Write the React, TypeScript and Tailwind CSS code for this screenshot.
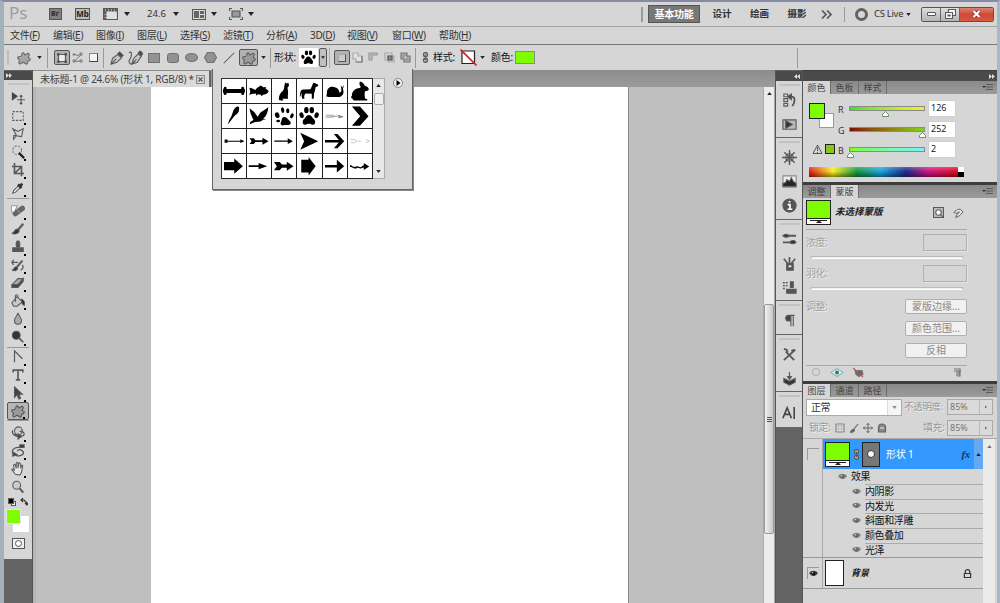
import type { ReactNode } from 'react'
import clsx from 'clsx'

interface IconProps {
  children: ReactNode
  className?: string
  box?: string
}

/** Stroke based icon, 16x16 grid unless another box is passed */
function Icon({ children, className = 'size-4', box = '0 0 16 16' }: IconProps) {
  return (
    <svg viewBox={box} className={clsx('shrink-0', className)} fill="none" stroke="#595959" strokeWidth="1.2">
      {children}
    </svg>
  )
}

function Caret({ className = 'h-[4px] w-[6px]' }: { className?: string }) {
  return (
    <svg viewBox="0 0 6 4" className={clsx('shrink-0', className)}>
      <path d="M0 0h6L3 4z" fill="#222" />
    </svg>
  )
}

// rounded five-lobed blob of the custom shape tool
const BLOB =
  'M5.500 4C5.800 1.500 8 1.500 8.500 4c.6.9 1.500.3 2.700-.7C13 2 14.800 3.200 13.800 5L12.800 7c0 1 2.400.8 2.400 2.500S12.800 11.200 12 12c-.6 1 .6 3-1.300 3S8.500 13 7 13s-2.500 2.300-4.300 1.600S3 11.500 2.700 10.500.7 9.500.7 7.800 3 6.300 4 6.300 5.200 5.500 5.500 4z'

const PAW = (
  <g fill="#000" stroke="none">
    <ellipse cx="14" cy="35" rx="6.500" ry="9" transform="rotate(-20 14 35)" />
    <ellipse cx="29" cy="19" rx="7" ry="10" />
    <ellipse cx="46" cy="19" rx="7" ry="10" />
    <ellipse cx="61" cy="35" rx="6.500" ry="9" transform="rotate(20 61 35)" />
    <path d="M37 34c9 0 10 9 16 14 6 6 4 19-5 17-5-1-6-3-11-3s-6 2-11 3c-9 2-11-11-5-17 6-5 7-14 16-14z" />
  </g>
)

/* ---------- title bar ---------- */

function TitleBar() {
  return (
    <header className="flex h-[25px] shrink-0 items-center border-b border-[#a3a3a3] bg-[#d6d6d6] text-[11px] text-[#333]">
      <div className="w-[40px] pb-[3px] pl-[5px] text-[17px] leading-none text-[#9c9c9c]">Ps</div>
      <div className="flex w-[22px] justify-center">
        <span className="flex h-[12px] w-[13px] items-center justify-center border border-[#555] bg-[#808080] text-[7px] font-bold text-[#2a2a2a]">Br</span>
      </div>
      <div className="flex w-[33px] justify-center">
        <span className="flex h-[12px] w-[15px] items-center justify-center border border-[#555] bg-[#bcbcbc] text-[8px] font-bold text-[#222]">Mb</span>
      </div>
      <div className="flex w-[23px] justify-center">
        <Icon className="h-[12px] w-[15px]" box="0 0 15 12">
          <path d="M.5.500h14v11H.5z" fill="#e0e0e0" />
          <path d="M0 2h15M2 3.500V12" strokeWidth="3" strokeDasharray="2.500 .5" />
        </Icon>
      </div>
      <div className="flex w-[9px] justify-center"><Caret /></div>
      <div className="ml-[11px] w-[29px] text-center text-[9.500px]">24.6</div>
      <div className="flex w-[9px] justify-center"><Caret /></div>
      <div className="ml-[9px] flex w-[20px] justify-center">
        <Icon className="h-[11px] w-[14px]" box="0 0 14 11">
          <path d="M.5.500h13v10H.5z" fill="#ddd" />
          <path d="M2 2h5v7H2zM8 2h4v3H8zM8 6h4v3H8z" fill="#666" stroke="none" />
        </Icon>
      </div>
      <div className="flex w-[10px] justify-center"><Caret /></div>
      <div className="ml-[7px] flex w-[20px] justify-center">
        <Icon className="h-[12px] w-[14px]" box="0 0 14 12">
          <path d="M3 3h8v6H3z" fill="#999" />
          <path d="M0 .5h3M.5 0v3M11 .5h3M13.500 0v3M0 11.500h3M.5 12V9M11 11.500h3M13.500 12V9" />
        </Icon>
      </div>
      <div className="flex w-[10px] justify-center"><Caret /></div>
      <div className="ml-[385px] h-[15px] w-[2px] border-x border-[#999]" />
      <div className="ml-[5px] flex h-[18px] w-[52px] items-center justify-center border border-[#555] bg-[#777] text-[10px] font-bold tracking-[-0.3px] text-white">
        基本功能
      </div>
      <div className="w-[44px] text-center text-[9.500px] font-bold">设计</div>
      <div className="w-[31px] text-center text-[9.500px] font-bold">绘画</div>
      <div className="w-[44px] text-center text-[9.500px] font-bold">摄影</div>
      <Icon className="h-[9px] w-[15px]" box="0 0 15 9">
        <path d="m3 .5 4 4-4 4M8 .5l4 4-4 4" strokeWidth="1.700" />
      </Icon>
      <div className="ml-[10px] h-[15px] w-px bg-[#999]" />
      <div className="ml-[10px] size-[13px] rounded-full border-[3px] border-[#626262]" />
      <div className="ml-[6px] w-[30px] text-[9.500px] tracking-[-0.3px] whitespace-nowrap">CS Live</div>
      <div className="flex w-[9px] justify-center"><Caret className="h-[3px] w-[5px]" /></div>
      <div className="ml-[8px] flex h-[15px] w-[73px] overflow-hidden rounded-[2px] border border-[#555]">
        <div className="flex w-[19px] items-center justify-center border-r border-[#666] bg-linear-to-b from-[#dedede] to-[#b4b4b4]">
          <span className="h-[4px] w-[9px] rounded-[1px] border border-[#555] bg-white" />
        </div>
        <div className="flex w-[19px] items-center justify-center border-r border-[#666] bg-linear-to-b from-[#dedede] to-[#b4b4b4]">
          <Icon className="h-[10px] w-[11px]" box="0 0 11 10">
            <path d="M3.500.500h7v6h-7z" fill="#fff" />
            <path d="M.5 3.500h7v6h-7zM3 6h2v1H3z" fill="#fff" />
          </Icon>
        </div>
        <div className="flex flex-1 items-center justify-center bg-linear-to-b from-[#dc8071] via-[#cf4a35] to-[#d4593f]">
          <Icon className="h-[8px] w-[9px]" box="0 0 9 8">
            <path d="m1.500 1 6 6M7.500 1l-6 6" stroke="#6d2a22" strokeWidth="3.400" />
            <path d="m1.500 1 6 6M7.500 1l-6 6" stroke="#fff" strokeWidth="2.200" />
          </Icon>
        </div>
      </div>
    </header>
  )
}

/* ---------- menu ---------- */

const MENUS = [
  { label: '文件', key: 'F', width: 'w-[43px]' },
  { label: '编辑', key: 'E', width: 'w-[43px]' },
  { label: '图像', key: 'I', width: 'w-[41px]' },
  { label: '图层', key: 'L', width: 'w-[43px]' },
  { label: '选择', key: 'S', width: 'w-[43px]' },
  { label: '滤镜', key: 'T', width: 'w-[43px]' },
  { label: '分析', key: 'A', width: 'w-[44px]' },
  { label: '3D', key: 'D', width: 'w-[37px]' },
  { label: '视图', key: 'V', width: 'w-[45px]' },
  { label: '窗口', key: 'W', width: 'w-[47px]' },
  { label: '帮助', key: 'H', width: 'w-[43px]' },
]

function MenuBar() {
  return (
    <nav className="flex h-[18px] shrink-0 items-center border-b border-[#777] bg-[#d6d6d6] pl-[6px] text-[10px] tracking-[-0.3px] text-[#333]">
      {MENUS.map(menu => (
        <div key={menu.key} className={clsx('shrink-0 whitespace-nowrap', menu.width)}>
          {menu.label}(<u>{menu.key}</u>)
        </div>
      ))}
    </nav>
  )
}

/* ---------- options bar ---------- */

function Cell({ className, children }: { className: string; children?: ReactNode }) {
  return <div className={clsx('flex shrink-0 items-center justify-center', className)}>{children}</div>
}

function OptionsBar() {
  return (
    <div className="flex h-[25px] shrink-0 items-center bg-[#d6d6d6] text-[10px] text-[#111]">
      <Cell className="w-[8px]"><div className="h-[15px] w-[2px] bg-[#c2beb5]" /></Cell>
      <Cell className="w-[24px]"><Icon className="size-[14px]"><path d={BLOB} fill="#a6a6a6" stroke="#666" /></Icon></Cell>
      <Cell className="w-[7px]"><Caret className="h-[3px] w-[5px]" /></Cell>
      <div className="ml-[4px] h-[20px] w-px bg-[#999]" />
      <Cell className="ml-[6px] h-[15px] w-[16px] rounded-[2px] border border-[#555] bg-[#b2b2b2]">
        <Icon className="size-[12px]" box="0 0 12 12">
          <path d="M2.500 2.500h7v7h-7z" fill="#eee" />
          <path d="M1 1h2.500v2.500H1zM8.500 1H11v2.500H8.500zM1 8.500h2.500V11H1zM8.500 8.500H11V11H8.500z" fill="#555" stroke="none" />
        </Icon>
      </Cell>
      <Cell className="w-[15px]">
        <Icon className="size-[11px]" box="0 0 11 11">
          <path d="M1 2h2v1H1zM8 1h2v2H8zM1 8h2v2H1zM8 8h2v2H8zM3 2.500l3 1 2-1M9 3 3 8.500M3 9.500l5-.5" stroke="#777" strokeWidth="1" />
        </Icon>
      </Cell>
      <Cell className="w-[16px]"><div className="size-[9px] border border-[#888] border-r-[#444] border-b-[#444] bg-[#f4f4f4]" /></Cell>
      <div className="ml-[2px] h-[20px] w-px bg-[#999]" />
      <Cell className="ml-[3px] w-[19px]">
        <Icon className="size-[14px]">
          <path d="M1 15 3 8l6-4 4 4-5 5zM1 15l6-6" fill="#c4c4c4" />
          <path d="m9 3 2-2 4 4-2 2z" fill="#444" />
        </Icon>
      </Cell>
      <Cell className="w-[19px]">
        <Icon className="size-[15px]">
          <path d="M4 15 6 9l5-5 3 3-4 6zM4 15l5-5" fill="#c9c9c9" />
          <path d="M1 3c4-3 3 4 1 7s0 5 2 5" />
          <path d="m11 3 2-2 3 3-2 2z" fill="#444" />
        </Icon>
      </Cell>
      <Cell className="w-[18px]"><div className="h-[10px] w-[12px] border border-[#707070] bg-[#929292]" /></Cell>
      <Cell className="w-[19px]"><div className="h-[10px] w-[12px] rounded-[3px] border border-[#707070] bg-[#929292]" /></Cell>
      <Cell className="w-[19px]"><div className="h-[9px] w-[13px] rounded-[50%] border border-[#707070] bg-[#929292]" /></Cell>
      <Cell className="w-[18px]">
        <Icon className="h-[11px] w-[13px]" box="0 0 13 11"><path d="M3.500.500h6l3 5-3 5h-6l-3-5z" fill="#929292" stroke="#707070" /></Icon>
      </Cell>
      <Cell className="w-[20px]"><Icon className="size-[12px]"><path d="M1 15 15 1" strokeWidth="1.400" /></Icon></Cell>
      <Cell className="h-[17px] w-[19px] rounded-[2px] border border-[#555] bg-[#b2b2b2]">
        <Icon className="size-[14px]"><path d={BLOB} fill="#9a9a9a" /></Icon>
      </Cell>
      <Cell className="w-[11px]"><Caret className="h-[3px] w-[5px]" /></Cell>
      <div className="ml-[1px] h-[20px] w-px bg-[#999]" />
      <div className="ml-[3px] w-[25px] tracking-[-0.2px] whitespace-nowrap">形状:</div>
      <Cell className="size-[19px] bg-white">
        <svg viewBox="2 5 71 66" className="size-[17px]">{PAW}</svg>
      </Cell>
      <Cell className="ml-[1px] h-[19px] w-[8px] rounded-[2px] border border-[#555] bg-[#c0c0c0]"><Caret className="h-[3px] w-[4px]" /></Cell>
      <div className="ml-[2px] h-[20px] w-px bg-[#aaa]" />
      <Cell className="ml-[4px] h-[15px] w-[16px] rounded-[2px] border border-[#555] bg-[#b2b2b2]">
        <div className="size-[8px] border border-[#aaa] border-r-[#555] border-b-[#555] bg-[#ccc]" />
      </Cell>
      <Cell className="w-[15px]">
        <Icon className="size-[11px]" box="0 0 11 11"><path d="M1 1h5v3h4v6H4V7H1z" stroke="#aaa" fill="#e2e2e2" /><path d="M4 10h6V4" stroke="#777" /></Icon>
      </Cell>
      <Cell className="w-[16px]">
        <Icon className="size-[11px]" box="0 0 11 11"><path d="M1 8V1h8v2H4v5z" stroke="#999" fill="#bbb" /></Icon>
      </Cell>
      <Cell className="w-[16px]">
        <Icon className="size-[11px]" box="0 0 11 11"><path d="M1 1h7v7H1zM4 4h6v6H4z" stroke="#aaa" /><path d="M4 4h4v4H4z" fill="#888" /></Icon>
      </Cell>
      <Cell className="w-[16px]">
        <Icon className="size-[11px]" box="0 0 11 11"><path d="M1 1h6v6H1zM4 4h6v6H4z" stroke="#777" fill="#aaa" /><path d="M4 4h3v3H4z" fill="#ddd" stroke="#999" /></Icon>
      </Cell>
      <div className="ml-[2px] h-[20px] w-px bg-[#999]" />
      <Cell className="ml-[3px] w-[13px]"><Chain /></Cell>
      <div className="ml-[1px] w-[27px] tracking-[-0.2px] whitespace-nowrap">样式:</div>
      <Cell className="w-[16px]">
        <Icon className="size-[17px]" box="0 0 17 17">
          <path d="M2 2h12.500v12.500H2z" fill="#fff" stroke="#222" />
          <path d="m.5.500 16 16" stroke="#d2232a" strokeWidth="1.600" />
        </Icon>
      </Cell>
      <Cell className="w-[13px]"><Caret className="h-[3px] w-[5px]" /></Cell>
      <div className="ml-[2px] w-[24px] tracking-[-0.2px] whitespace-nowrap">颜色:</div>
      <div className="h-[13px] w-[20px] border border-[#8b8b8b] bg-[#7efc02]" />
      <div className="ml-[262px] h-[20px] w-px bg-[#999]" />
    </div>
  )
}

function Chain() {
  return (
    <Icon className="h-[11px] w-[7px]" box="0 0 7 11">
      <rect x="1.500" y=".7" width="4" height="4" rx="1.500" fill="#aaa" />
      <rect x="1.500" y="6.300" width="4" height="4" rx="1.500" fill="#aaa" />
      <path d="M3.500 3v5" />
    </Icon>
  )
}

/* ---------- tool bar ---------- */

interface Tool {
  id: string
  art: ReactNode
  flyout?: boolean
  active?: boolean
}

const TOOL_GROUPS: { className: string; tools: Tool[] }[] = [
  {
    className: 'mb-[3px] border-b border-[#999] pb-px',
    tools: [
      {
        id: 'move',
        flyout: false,
        art: <><path d="M1 1v10l7-5z" fill="#444" stroke="none" /><path d="M11.500 5.500v9M7 10h9" /><path d="m11.500 4 2 2.500h-4zM11.500 16l2-2.500h-4z" fill="#444" stroke="none" /></>,
      },
      { id: 'marquee', art: <path d="M2 3h12v10H2z" strokeDasharray="2.500 1.500" /> },
      { id: 'lasso', art: <path d="M2 2l6 3 6-3-2 9-6-1-3 4V10l3-1z" /> },
      {
        id: 'wand',
        art: <><circle cx="7" cy="6" r="5" strokeDasharray="2.500 1.500" stroke="#777" /><path d="m9 9 6 6" strokeWidth="2.600" stroke="#222" /></>,
      },
      { id: 'crop', art: <path d="M4 0v12h11M1 4h11v11M4 12l8-8" strokeWidth="1.900" /> },
      {
        id: 'eyedropper',
        art: <><path d="m2 14 1-3 6-6 2 2-6 6z" fill="#eee" /><path d="m8 4 4 4M10 6l3-3" strokeWidth="3" stroke="#333" /></>,
      },
    ],
  },
  {
    className: 'border-b border-[#999] pb-px',
    tools: [
      {
        id: 'healing',
        art: <><path d="M1 2h6L3 12C0 9 0 5 1 2z" fill="#fff" stroke="#999" /><path d="m5 11 8-6" strokeWidth="6" strokeLinecap="round" stroke="#666" /><path d="m7.500 7 3 3" stroke="#999" /></>,
      },
      {
        id: 'brush',
        art: <><path d="M1 13c3 0 2-4 6-5 4 1 2 4 0 5-2 1-4 1-6 0z" fill="#333" /><path d="m8 9 6-7" strokeWidth="2.600" /></>,
      },
      {
        id: 'stamp',
        art: <><path d="M6.500 8c-1-3-1-7 1.500-7s2.500 4 1.500 7z" fill="#555" /><path d="M2 9h12v4H2z" fill="#555" /></>,
      },
      {
        id: 'history-brush',
        art: <><path d="M1 14c3 0 2-4 5-4 3 1 1 4-1 4.500z" fill="#333" /><path d="m7 10 6-7" strokeWidth="2.200" /><path d="M1 5h7M3 2 1 5l2 3M13 8c2 2 0 5-2 6" strokeWidth="1.500" /></>,
      },
      { id: 'eraser', art: <><path d="m1 10 7-7h6l-6 7z" fill="#aaa" /><path d="M1 10h7l6-7v3l-6 7H1z" fill="#444" /></> },
      {
        id: 'bucket',
        art: <><path d="m1 10 6-7 6 6-6 5H3z" fill="#c8c8c8" /><path d="M5 9V2c1-2 3-1 3 1" /><path d="M12 6c3 1 4 4 3 7-2-1-3-3-3-7z" fill="#222" /></>,
      },
      { id: 'blur', art: <path d="M8 1c1 4 4 5 4 9 0 3-2 4-4 4s-4-1-4-4c0-4 3-5 4-9z" fill="#aaa" /> },
      { id: 'dodge', art: <><circle cx="6" cy="6" r="4.500" fill="#333" /><path d="m9 9 5 5" strokeWidth="2" /></> },
    ],
  },
  {
    className: 'mb-[3px] border-b border-[#999]',
    tools: [
      { id: 'path-pen', art: <path d="M4 14V1l9 9" strokeWidth="1.400" /> },
      { id: 'type', art: <path d="M2.500 5V2.500h11V5M8 2.500v11M5.500 13.500h5" strokeWidth="1.900" /> },
      { id: 'path-select', art: <path d="M4 1v12l3-3 2 5 2-1-2-4.500h4z" fill="#444" /> },
      { id: 'custom-shape', active: true, art: <path d={BLOB} fill="#999" stroke="#555" /> },
    ],
  },
  {
    className: '',
    tools: [
      {
        id: '3d-rotate',
        art: <><circle cx="8.500" cy="5.500" r="4.500" fill="#ccc" /><path d="M2 5c-2 4 3 7 7 7M4 9c3 4 11 3 11 0 0-2-3-3-5-3" strokeWidth="1.500" /><path d="m8 9 4 3-4 3z" fill="#444" /></>,
      },
      {
        id: '3d-camera',
        art: <><path d="M2 10c-2-4 4-7 8-6M3 11c4 5 12 2 11-2-1-2-4-4-7-1" strokeWidth="1.500" /><path d="M10 1h5v3h-5z" fill="#333" /><path d="m2 9 5 3-5 2z" fill="#444" /></>,
      },
      {
        id: 'hand',
        art: <path d="M5 14 1 9c0-2 2-1 3 1L3 4c0-2 2-2 2 0l1 3V2c0-2 2-2 2 0v5l1-5c0-2 2-1 2 1v4l1-3c1-1 2 0 1 2l-1 6-2 3z" fill="#e5e5e5" />,
      },
      { id: 'zoom', flyout: false, art: <><circle cx="6.500" cy="6" r="4.500" fill="#ccc" /><path d="m10 9.500 4 5" strokeWidth="2.200" /></> },
    ],
  },
]

function ToolBar() {
  return (
    <aside className="flex w-[29px] shrink-0 flex-col border-r border-[#555] bg-[#636363]">
      <div className="mt-px flex h-[9px] items-center bg-[#4a4a4a] pl-[2px]"><DoubleArrow /></div>
      <div className="flex h-[479px] flex-col items-center bg-[#d6d6d6] pt-[3px]">
        <div className="h-[2px] w-[21px] bg-[#c4c4c4]" />
        <div className="mt-[4px] flex flex-col">
          {TOOL_GROUPS.map(group => (
            <div key={group.tools[0].id} className={clsx('flex w-[22px] flex-col', group.className)}>
              {group.tools.map(tool => (
                <div
                  key={tool.id}
                  className={clsx(
                    'relative flex h-[18px] items-center justify-center',
                    tool.active && 'rounded-[2px] border border-[#555] bg-[#b6b6b6]',
                  )}
                >
                  <Icon className="size-[14px]">{tool.art}</Icon>
                  {tool.flyout !== false && <span className="absolute right-[3px] bottom-0 size-[2px] bg-black" />}
                </div>
              ))}
            </div>
          ))}
        </div>
        <div className="mt-[2px] flex w-[21px] items-center justify-between pr-[1px]">
          <Icon className="size-[8px]" box="0 0 8 8"><path d="M3.500 3.500h4v4h-4z" fill="#fff" /><path d="M.5.500h5v5h-5z" fill="#000" /></Icon>
          <Icon className="size-[8px]" box="0 0 8 8"><path d="M1 2h3l3 3v2M3 0 1 2l2 2M5 5l2 2 1-2" stroke="#333" /></Icon>
        </div>
        <div className="mt-[3px] grid w-[23px] grid-cols-[15px_8px]">
          <div className="z-10 col-start-1 row-start-1 -ml-px size-[15px] border border-[#e4e4e4] bg-[#7efc02]" />
          <div className="col-span-2 col-start-1 row-start-1 mt-[7px] ml-[6px] h-[16px] w-[16px] bg-white" />
        </div>
        <div className="mt-[6px] flex h-[11px] w-[13px] items-center justify-center border border-[#555] bg-[#f1f1f1]">
          <div className="size-[7px] rounded-full border border-[#555] bg-white" />
        </div>
      </div>
    </aside>
  )
}

function DoubleArrow({ flip = false }: { flip?: boolean }) {
  return (
    <svg viewBox="0 0 6 5" className={clsx('h-[5px] w-[6px]', flip && '-scale-x-100')}>
      <path d="M0 0l3 2.500L0 5zM3 0l3 2.500L3 5z" fill="#ddd" />
    </svg>
  )
}

/* ---------- document ---------- */

function DocumentArea() {
  return (
    <main className="flex w-[742px] shrink-0 flex-col">
      <div className="flex h-[17px] bg-linear-to-b from-[#8c8c8c] to-[#9b9b9b] pt-px">
        <div className="flex w-[178px] items-center border-r-2 border-[#666] bg-[#dadada] pl-[7px] text-[10px] text-[#444]">
          <span className="w-[156px] tracking-[-0.25px] whitespace-nowrap">未标题-1 @ 24.6% (形状 1, RGB/8) *</span>
          <Icon className="size-[9px]" box="0 0 9 9">
            <path d="M.5.500h8v8h-8z" stroke="#888" />
            <path d="m2.500 2.500 4 4M6.500 2.500l-4 4" />
          </Icon>
        </div>
      </div>
      <div className="flex min-h-0 flex-1">
        <div className="flex-1 border-l-[3px] border-[#b6b6b6] bg-[#bfbfbf]">
          <div className="ml-[115px] h-full w-[478px] border-r border-[#888] bg-white" />
        </div>
        <div className="flex w-[12px] flex-col items-center border-x border-[#aaa] bg-[#ececec]">
          <div className="flex h-[217px] pt-[5px]"><Caret className="h-[3px] w-[5px] rotate-180" /></div>
          <div className="flex h-[230px] w-[10px] flex-col items-center justify-center gap-px rounded-[2px] border border-[#999] bg-linear-to-r from-[#f0f0f0] to-[#c9c9c9]">
            <div className="h-px w-[5px] bg-[#555]" />
            <div className="h-px w-[5px] bg-[#555]" />
            <div className="h-px w-[5px] bg-[#555]" />
          </div>
        </div>
      </div>
    </main>
  )
}

/* ---------- shape picker ---------- */

// every shape sits on a 75x75 grid
const SHAPES: { id: string; art: ReactNode }[] = [
  { id: 'bone', art: <path d="M14 31h46c-2-8 9-9 9-1 4 4 3 12 0 15 0 7-11 7-9-1H14c2 8-9 8-9 1-3-3-4-11 0-15 0-8 11-7 9 1z" /> },
  { id: 'fish', art: <path d="M7 27l8 2 11 5c4-7 10-9 17-14l8 6 8-1-1 5 11 8-5 2 2 2c-6 6-11 6-16 7l-5 5-2-5-10-1-4 4-2-7-13 2-7 3 3-10z" /> },
  { id: 'cat', art: <path d="M41 10l4 4 6-2 2 9-5 6c2 8 3 19 1 26l1 9H31l5 4-5 2-9-2c-2-6 1-20 8-25 5-4 9-11 8-18z" /> },
  { id: 'dog', art: <path d="M51 12l6 1 9 5v4l-8 3-3 15-2 5-1 17h-6V46l-20-1-4 8 1 9h-7l-2-8 1-12-4 10-3 4 2-14c2-8 6-9 13-9l19-1z" /> },
  { id: 'snail', art: <path d="M7 53c6 0 4-5 5-11 0-14 12-20 22-17 11 2 17 9 17 18 5-1 7-5 6-11l-2-13 5 8 4-7 1 1-3 10c5 14-1 23-12 25H17z" /> },
  { id: 'rabbit', art: <path d="M37 8c7 1 12 6 15 13 7 1 12 5 13 12-2 4-7 5-12 5-1 6-2 10-1 15l1 8 7 2v4H20c-4 0-6-3-6-6-5 0-6-6-2-9 0-14 9-22 24-24l4-3c-4-4-6-10-3-17z" /> },
  { id: 'parrot', art: <path d="M48 8c4-1 7 3 5 7 1 10-5 16-13 21L18 64l4-13 7-13 7-19c3-5 6-9 12-11z" /> },
  { id: 'bird', art: <path d="M8 13l15 13 10 14 8-13c7-5 14-8 25-17-1 17-7 30-16 35l9 3-9 1c-9 8-15 6-25 7L8 63l2-7 10-6C14 37 9 27 8 13z" /> },
  {
    id: 'claw',
    art: <>
      <ellipse cx="33" cy="19" rx="5" ry="9" transform="rotate(-10 33 19)" />
      <ellipse cx="49" cy="21" rx="5" ry="8" />
      <ellipse cx="16" cy="35" rx="7" ry="9" transform="rotate(-20 16 35)" />
      <ellipse cx="62" cy="37" rx="5" ry="8" transform="rotate(25 62 37)" />
      <ellipse cx="19" cy="53" rx="6" ry="4" />
      <path d="M38 41c7-1 8 5 15 10 7 6 7 10 2 14-8 2-14 0-23 2-9-3-4-9-3-14 1-6 3-12 9-12z" />
    </>,
  },
  { id: 'paw', art: PAW },
  { id: 'feather-arrow', art: <path d="M8 35h24M8 41h24v-3h14M46 35l16 5-14 3 3-4z" stroke="#666" strokeWidth="2" fill="#777" /> },
  { id: 'chevron', art: <path d="M12 8h25l27 30-27 30H12l26-30z" /> },
  { id: 'dot-arrow', art: <path d="M8 33h9v4h40v-5l13 6-13 6v-4H17v3H8z" /> },
  { id: 'fletched', art: <path d="M8 29h13l5 6h22v-8l19 11-19 11v-8H26l-5 6H8l6-9z" /> },
  { id: 'thin-arrow', art: <path d="M7 36h42v-7l16 9-16 9v-7H7z" /> },
  { id: 'dart', art: <path d="M10 12l56 26-56 27 12-27z" /> },
  { id: 'open-arrow', art: <path d="M6 34h43L34 16h11l21 22-21 22H34l15-18H6z" /> },
  { id: 'ghost-arrow', art: <path d="M8 33h12l8 5-8 5H8M31 38h9M56 33l11 5-11 5" fill="none" stroke="#aaa" strokeWidth="2" /> },
  { id: 'bold-arrow', art: <path d="M6 25h32V14l27 24-27 24V51H6z" /> },
  { id: 'long-arrow', art: <path d="M5 35h31v-7l27 10-27 10v-7H5z" /> },
  { id: 'bold-fletched', art: <path d="M6 25h18l7 8h15v-9l21 14-21 14v-9H31l-7 8H6l9-13z" /> },
  { id: 'block-arrow', art: <path d="M13 18h23V9l22 29-22 29v-9H13z" /> },
  { id: 'arrow', art: <path d="M6 34h37V18l23 20-23 20V42H6z" /> },
  { id: 'wave-arrow', art: <path d="M6 35c9 0 7 6 14 5s8-4 15 0 9-5 14-4v-8l17 11-17 11v-8c-6 0-9 6-15 2s-6 3-14 1-7-5-14-4z" /> },
]

function ShapePicker() {
  return (
    <div className="absolute top-[67px] left-[208px] flex h-[121px] w-[201px] border border-t-0 border-[#666] bg-[#d6d6d6] pt-[9px] pl-[8px] shadow-[1px_1px_0_#888]">
      <div className="grid h-[101px] w-[152px] grid-cols-6 grid-rows-4 border-t border-l border-[#333]">
        {SHAPES.map(shape => (
          <div key={shape.id} className="border-r border-b border-[#222] bg-white">
            <svg viewBox="0 0 75 75" className="size-full" fill="#000">{shape.art}</svg>
          </div>
        ))}
      </div>
      <div className="flex h-[101px] w-[12px] flex-col items-center border border-l-0 border-[#aaa] bg-[#e8e8e8] py-[5px]">
        <Caret className="h-[3px] w-[5px] rotate-180" />
        <div className="mt-[6px] h-[12px] w-[10px] rounded-[2px] border border-[#aaa] bg-[#f0f0f0]" />
        <Caret className="mt-auto h-[3px] w-[5px]" />
      </div>
      <Icon className="ml-[8px] size-[10px]" box="0 0 10 10">
        <circle cx="5" cy="5" r="4.500" fill="#eee" stroke="#777" strokeWidth=".8" />
        <path d="M3.500 2v6L7.500 5z" fill="#000" stroke="none" />
      </Icon>
    </div>
  )
}

/* ---------- icon dock ---------- */

const DOCK: { height: string; icons: { id: string; art: ReactNode }[] }[] = [
  {
    height: 'h-[57px]',
    icons: [
      { id: 'history', art: <><path d="M2 1h4v3H2zM2 6h4v3H2zM2 11h4v3H2z" /><path d="M9 4c6-1 5 6 2 10" strokeWidth="2" /><path d="m10 1-4 3 4 3z" fill="#444" /></> },
      { id: 'actions', art: <><path d="M1 3h14v10H1z" fill="#bbb" /><path d="M4 4v8l7-4z" fill="#333" /></> },
    ],
  },
  {
    height: 'h-[82px]',
    icons: [
      { id: 'adjust', art: <><circle cx="8" cy="8" r="4" /><path d="M8 0v16M0 8h16M2.500 2.500l11 11M13.500 2.500l-11 11" strokeWidth="1.500" /></> },
      { id: 'histogram', art: <><path d="M1 2h14v12H1z" fill="#eee" stroke="#888" /><path d="M1 13v-3l3-1 1-3 3 2 2-4 2 4 3 2v3z" fill="#222" /></> },
      { id: 'info', art: <><circle cx="8" cy="8" r="7" fill="#555" stroke="#555" /><path d="M6 7h2.500v5M6 12h5M7 4h2" stroke="#fff" strokeWidth="1.800" /></> },
    ],
  },
  {
    height: 'h-[81px]',
    icons: [
      { id: 'brushes', art: <><path d="M1 4c3-3 5-1 7 0-2 2-5 2-7 0zM15 11c-2-3-5-2-7 0 2 2 5 2 7 0z" fill="#333" /><path d="M7 4h8M1 11h8" strokeWidth="2" /></> },
      { id: 'brush-set', art: <><path d="M5 8h7v7H5z" fill="#555" /><path d="M7 11h3" stroke="#eee" strokeWidth="2" /><path d="M6 8 2 3M8 8V1M10 8l4-5" strokeWidth="1.800" /></> },
      { id: 'clone', art: <><path d="M1 3h2M4 3h2M1 6h2M4 6h2M1 9h2" strokeWidth="1.500" /><path d="M9 2h3v6H9zM5 10h10v4H5z" fill="#555" /></> },
    ],
  },
  {
    height: 'h-[34px]',
    icons: [{ id: 'paragraph', art: <><path d="M9.500 3v11M12 3v11" /><path d="M13.500 2.500H7c-4 0-4 6 0 6h2v-6" fill="#444" /></> }],
  },
  {
    height: 'h-[57px]',
    icons: [
      { id: 'tools', art: <path d="M2 14 14 3M2 2l3 1 1 3M4 5l9 9M14 3l-4 1" strokeWidth="2" /> },
      { id: 'layer-comps', art: <><path d="m2 8 6 3 6-3v4l-6 3-6-3z" fill="#333" /><path d="M8 1v8M6 6l2 3 2-3z" fill="#444" /></> },
    ],
  },
  {
    height: 'h-[36px]',
    icons: [{ id: 'character', art: <path d="m1 14 4.500-11L10 14M3 10h5M13 2v13" strokeWidth="1.700" stroke="#444" /> }],
  },
]

function IconDock() {
  return (
    <aside className="flex w-[28px] shrink-0 flex-col border-x border-[#555] bg-[#636363]">
      <div className="mt-px flex h-[10px] items-center justify-end bg-[#4a4a4a] pr-[2px]"><DoubleArrow flip /></div>
      {DOCK.map((group, i) => (
        <div key={i} className={clsx('flex shrink-0 flex-col items-center border-b border-[#666] bg-[#d6d6d6] pt-[3px]', group.height)}>
          <div className="h-[2px] w-[21px] shrink-0 bg-[#c2c2c2]" />
          <div className="flex flex-1 flex-col justify-center gap-[9px] pt-px">
            {group.icons.map(icon => <Icon key={icon.id} className="size-[15px]">{icon.art}</Icon>)}
          </div>
        </div>
      ))}
    </aside>
  )
}

/* ---------- panels ---------- */

function PanelTabs({ tabs, active }: { tabs: string[]; active: number }) {
  return (
    <div className="flex h-[13px] shrink-0 items-stretch bg-linear-to-b from-[#898989] to-[#9b9b9b] text-[9px] leading-[13px] text-[#444]">
      {tabs.map((tab, i) => (
        <div key={tab} className={clsx('w-[28px] border-r border-[#6d6d6d] text-center', i === active && 'bg-[#d6d6d6]')}>{tab}</div>
      ))}
      <div className="mt-[3px] mr-[4px] ml-auto">
        <Icon className="h-[7px] w-[11px]" box="0 0 11 7"><path d="M4 .5h7M4 3h7M4 5.500h7" strokeWidth="1" /><path d="M0 2h4L2 4z" fill="#333" stroke="none" /></Icon>
      </div>
    </div>
  )
}

const CHANNELS = [
  { name: 'R', value: 126, ramp: 'bg-linear-to-r from-[#2ee32e] to-[#f6ec2c]', percent: 49 },
  { name: 'G', value: 252, ramp: 'bg-linear-to-r from-[#7c0a06] to-[#7ed518]', percent: 99 },
  { name: 'B', value: 2, ramp: 'bg-linear-to-r from-[#7efc02] to-[#7eeff5]', percent: 1 },
]

function ColorPanel() {
  return (
    <section className="flex h-[101px] shrink-0 flex-col bg-[#d6d6d6]">
      <PanelTabs tabs={['颜色', '色板', '样式']} active={0} />
      <div className="flex h-[73px] pt-[6px] pl-[6px]">
        <div className="w-[29px]">
          <div className="grid h-[44px] grid-cols-1 pt-[3px]">
            <div className="z-10 col-start-1 row-start-1 size-[16px] border border-[#222] bg-[#7efc02]" />
            <div className="col-start-1 row-start-1 mt-[10px] ml-[10px] size-[15px] border border-[#999] bg-white" />
          </div>
          <div className="flex items-center gap-[2px] pl-[3px]">
            <Icon className="h-[10px] w-[11px]" box="0 0 11 10"><path d="M5.500 1 10 9.500H1zM5.500 3v4M5.500 8v1" strokeWidth="1" /></Icon>
            <div className="size-[10px] border border-[#222] bg-[#84c81c]" />
          </div>
        </div>
        <div className="flex flex-col">
          {CHANNELS.map(channel => (
            <div key={channel.name} className="flex h-[20.500px] items-start">
              <span className="w-[11px] pt-[3px] text-[9px] leading-[13px] text-[#333]">{channel.name}</span>
              <div className={clsx('relative mt-[6px] h-[5px] w-[76px] border border-[#8b8b8b]', channel.ramp)}>
                <svg viewBox="0 0 7 6" className="absolute top-[4px] -ml-[4px] h-[6px] w-[7px]" style={{ left: `${channel.percent}%` }}>
                  <path d="M3.500.500 6.500 3.500v2h-6v-2z" fill="#fff" stroke="#567356" strokeWidth=".8" />
                </svg>
              </div>
              <span className="ml-[3px] h-[17px] w-[28px] border border-[#d0d0d0] bg-white pl-[2px] text-[9px] leading-[14px] text-[#222]">
                {channel.value}
              </span>
            </div>
          ))}
        </div>
      </div>
      <div className="ml-[6px] flex h-[10px] w-[155px]">
        <div className="flex-1 bg-[linear-gradient(to_bottom,rgba(255,255,255,.25),transparent_45%,rgba(0,0,0,.45)),linear-gradient(to_right,#e8141c,#f7ee1e_16%,#159b3c_32%,#18a6df_48%,#1d2c90_65%,#d51481_81%,#e00d1c)]" />
        <div className="w-[6px] bg-linear-to-b from-white from-50% to-black to-50%" />
      </div>
    </section>
  )
}

function LayerThumb() {
  return (
    <div className="flex h-[25px] w-[25px] shrink-0 flex-col border border-[#222] bg-[#7efc02]">
      <div className="flex-1" />
      <Icon className="h-[6px] w-full" box="0 0 23 6">
        <path d="M0 0h23v6H0z" fill="#fff" stroke="none" />
        <path d="M0 .5h23M3 2.500h17" stroke="#222" strokeWidth="1" />
        <path d="m12 2 3 3H9z" fill="#222" stroke="none" />
      </Icon>
    </div>
  )
}

function MaskSlider({ label }: { label: string }) {
  return (
    <div className="h-[31px]">
      <div className="flex h-[20px] items-center justify-between text-[#a2a2a2] [text-shadow:1px_1px_0_#eee]">
        <span className="tracking-[-0.5px]">{label}</span>
        <div className="h-[17px] w-[44px] border border-[#b0b0b0] shadow-[1px_1px_0_#e4e4e4]" />
      </div>
      <div className="mt-[4px] ml-[5px] h-[3px] w-[152px] border border-[#bbb] border-b-white bg-[#eee]" />
    </div>
  )
}

function MaskPanel() {
  return (
    <section className="mt-[3px] flex h-[196px] shrink-0 flex-col bg-[#d6d6d6] text-[10px]">
      <PanelTabs tabs={['调整', '蒙版']} active={1} />
      <div className="ml-[3px] w-[161px]">
        <div className="flex h-[32px] items-center border-b border-[#aaa] pb-[2px]">
          <LayerThumb />
          <span className="ml-[4px] flex-1 text-[9.500px] font-bold text-[#222] italic">未选择蒙版</span>
          <Icon className="size-[11px]" box="0 0 12 12"><path d="M.5.500h11v11H.5z" fill="#bbb" /><circle cx="6" cy="6" r="3" fill="#fff" /><path d="M8 8l3 3" /></Icon>
          <Icon className="mr-[3px] ml-[9px] size-[11px]" box="0 0 12 12"><path d="M5 2.500h3l3 3-4 4-4 2 1-3 3-2.500M1 6l3.500-3.500M1 6l3 1 3-2" strokeWidth="1" fill="#e4e4e4" /></Icon>
        </div>
        <div className="pt-[2px]">
          <MaskSlider label="浓度:" />
          <MaskSlider label="羽化:" />
        </div>
        <div className="flex justify-between pt-[5px] text-[#a2a2a2]">
          <span className="leading-[15px] tracking-[-0.5px] [text-shadow:1px_1px_0_#eee]">调整:</span>
          <div className="flex flex-col gap-[7px] pb-[7px]">
            {['蒙版边缘...', '颜色范围...', '反相'].map(label => (
              <div key={label} className="h-[15px] w-[62px] rounded-[2px] border border-[#b0b0b0] bg-[#f1f1f1] text-center leading-[13px] text-[#888]">{label}</div>
            ))}
          </div>
        </div>
        <div className="flex h-[13px] items-center border-t border-[#aaa] pl-[5px]">
          <Icon className="size-[10px]" box="0 0 10 10"><circle cx="5" cy="5" r="3.500" stroke="#b5b5b5" /></Icon>
          <Icon className="ml-[9px] h-[9px] w-[14px]" box="0 0 14 9"><path d="m1 4.500 6-4 6 4-6 4z" fill="#e8f6f5" stroke="#8fb4b4" /><circle cx="7" cy="4.500" r="2" fill="#287a7a" stroke="none" /></Icon>
          <Icon className="ml-[9px] size-[11px]" box="0 0 11 11"><path d="m2 3.500 7 0 1 4-4 2-3-2z" fill="#666" stroke="#777" /><path d="m0 1 10 9" stroke="#b55" /></Icon>
          <Icon className="mr-[5px] ml-auto size-[10px]" box="0 0 10 10"><path d="M2 2h6v7H5M2 4h7M5 4v5M7 4v4" stroke="#777" /></Icon>
        </div>
      </div>
    </section>
  )
}

function Eye({ dark = false }: { dark?: boolean }) {
  return (
    <svg viewBox="0 0 10 8" className="h-[7px] w-[9px] shrink-0" fill={dark ? '#111' : '#666'}>
      <path d="M0 3.500C2 0 8 0 10 3.500 8 8 2 8 0 3.500z" opacity=".75" />
      <circle cx="5" cy="4" r="2.200" />
      <circle cx="4" cy="3" r=".8" fill="#eee" />
    </svg>
  )
}

function Opacity() {
  return (
    <div className="flex h-[16px] w-[46px] border border-[#aaa] bg-[#dadada] text-[9px] leading-[14px] text-[#777]">
      <span className="w-[32px] border-r border-[#bbb] pl-[2px]">85%</span>
      <span className="flex flex-1 items-center justify-center"><Caret className="h-[2px] w-[4px] -rotate-90 opacity-60" /></span>
    </div>
  )
}

const EFFECTS = ['内阴影', '内发光', '斜面和浮雕', '颜色叠加', '光泽']

function LayersPanel() {
  return (
    <section className="mt-[3px] flex min-h-0 flex-1 flex-col bg-[#d6d6d6] text-[10px] text-[#111]">
      <PanelTabs tabs={['图层', '通道', '路径']} active={0} />
      <div className="flex h-[20px] shrink-0 items-center pl-[3px]">
        <div className="flex h-[17px] w-[96px] border border-[#aaa] bg-white pl-[4px] leading-[15px] text-[#333]">
          <span className="flex-1 tracking-[-0.5px]">正常</span>
          <span className="flex w-[14px] items-center justify-center border-l border-[#ddd] bg-[#f5f5f5]"><Caret className="h-[3px] w-[5px] opacity-50" /></span>
        </div>
        <span className="ml-[2px] w-[43px] text-[9.500px] tracking-[-0.3px] whitespace-nowrap text-[#999] [text-shadow:1px_1px_0_#eee]">不透明度:</span>
        <Opacity />
      </div>
      <div className="flex h-[22px] shrink-0 items-center border-b border-[#aaa] pl-[6px] text-[#999]">
        <span className="w-[26px] tracking-[-0.5px] whitespace-nowrap [text-shadow:1px_1px_0_#eee]">锁定:</span>
        <div className="flex w-[88px] gap-[4px]">
          <Icon className="size-[10px]" box="0 0 10 10"><path d="M1 1h8v8H1zM3 3h1M6 3h1M3 6h1M6 6h1" stroke="#888" /></Icon>
          <Icon className="size-[10px]" box="0 0 10 10"><path d="M1 9c2 0 1-3 4-3 1 2-1 4-4 3zM5 6l4-5" fill="#666" stroke="#666" /></Icon>
          <Icon className="size-[10px]" box="0 0 10 10"><path d="M5 0v10M0 5h10M3.500 2 5 .5 6.500 2M3.500 8 5 9.500 6.500 8M2 3.500.500 5 2 6.500M8 3.500 9.500 5 8 6.500" stroke="#666" strokeWidth="1" /></Icon>
          <Icon className="size-[10px]" box="0 0 10 10"><path d="M1.500 9V4c0-4 7-4 7 0v5z" fill="#888" stroke="#666" /><path d="M3 5h4" stroke="#ddd" /></Icon>
        </div>
        <span className="w-[24px] tracking-[-0.5px] whitespace-nowrap [text-shadow:1px_1px_0_#eee]">填充:</span>
        <Opacity />
      </div>
      <div className="flex min-h-0 flex-1">
        <div className="flex w-[180px] flex-col">
          <div className="flex h-[30px] shrink-0">
            <div className="flex w-[20px] items-center justify-center border-r border-[#aaa]">
              <div className="size-[12px] border-t border-l border-[#999]" />
            </div>
            <div className="flex flex-1 items-center bg-[#3399ff] pl-[2px] text-white">
              <LayerThumb />
              <div className="flex w-[12px] justify-center"><Chain /></div>
              <div className="flex h-[25px] w-[18px] items-center justify-center border border-[#222] bg-[#777]">
                <div className="size-[8px] rounded-full border border-[#333] bg-white" />
              </div>
              <span className="ml-[6px] flex-1 tracking-[-0.2px]">形状 1</span>
              <span className="font-['Liberation_Serif',serif] text-[11px] font-bold tracking-[-0.3px] text-[#1d3552] italic">fx</span>
              <span className="ml-[4px] flex h-full w-[9px] items-center justify-center bg-[#64aaf2]"><Caret className="h-[3px] w-[5px] rotate-180" /></span>
            </div>
          </div>
          <div className="flex h-[89px] shrink-0 border-b border-[#999]">
            <div className="w-[20px] shrink-0 border-r border-[#aaa]" />
            <div className="flex flex-1 flex-col tracking-[-0.4px]">
              <div className="flex h-[15px] items-center pl-[15px]"><Eye /><span className="ml-[4px]">效果</span></div>
              {EFFECTS.map(name => (
                <div key={name} className="flex h-[14.800px] items-center pl-[29px]">
                  <Eye />
                  <span className="ml-[4px] flex-1 border-t border-[#aaa] leading-[13px]">{name}</span>
                </div>
              ))}
            </div>
          </div>
          <div className="flex h-[31px] shrink-0 items-center border-b border-[#999]">
            <div className="flex h-full w-[20px] items-center justify-center border-r border-[#aaa]">
              <div className="flex size-[12px] items-center justify-center border-t border-l border-[#999]"><Eye dark /></div>
            </div>
            <div className="ml-[2px] h-[26px] w-[19px] border border-[#222] bg-white" />
            <span className="ml-[7px] flex-1 text-[9px] font-bold italic">背景</span>
            <Icon className="mr-[11px] size-[9px]" box="0 0 9 10"><path d="M1 5h7v4.500H1zM2 5V3C2 0 7 0 7 3v2" stroke="#333" strokeWidth="1.300" /></Icon>
          </div>
        </div>
        <div className="flex w-[12px] justify-center bg-[#ebebeb] pt-[6px]"><Caret className="h-[3px] w-[5px] rotate-180 opacity-60" /></div>
      </div>
    </section>
  )
}

export default function App() {
  return (
    <div className="relative flex h-[603px] w-[1000px] flex-col overflow-hidden border-t-2 border-r-[3px] border-l-[4px] border-t-[#858ba5] border-r-[#a9b8c8] border-l-[#a4b0ba] bg-[#d6d6d6] font-['Noto_Sans','Noto_Sans_CJK_SC',sans-serif]">
      <TitleBar />
      <MenuBar />
      <OptionsBar />
      <div className="flex min-h-0 flex-1">
        <ToolBar />
        <DocumentArea />
        <IconDock />
        <div className="flex min-w-0 flex-1 flex-col bg-[#3c3c3c]">
          <div className="mt-px flex h-[10px] shrink-0 items-center justify-end bg-[#4a4a4a] pr-[2px]"><DoubleArrow /></div>
          <ColorPanel />
          <MaskPanel />
          <LayersPanel />
        </div>
      </div>
      <ShapePicker />
    </div>
  )
}
